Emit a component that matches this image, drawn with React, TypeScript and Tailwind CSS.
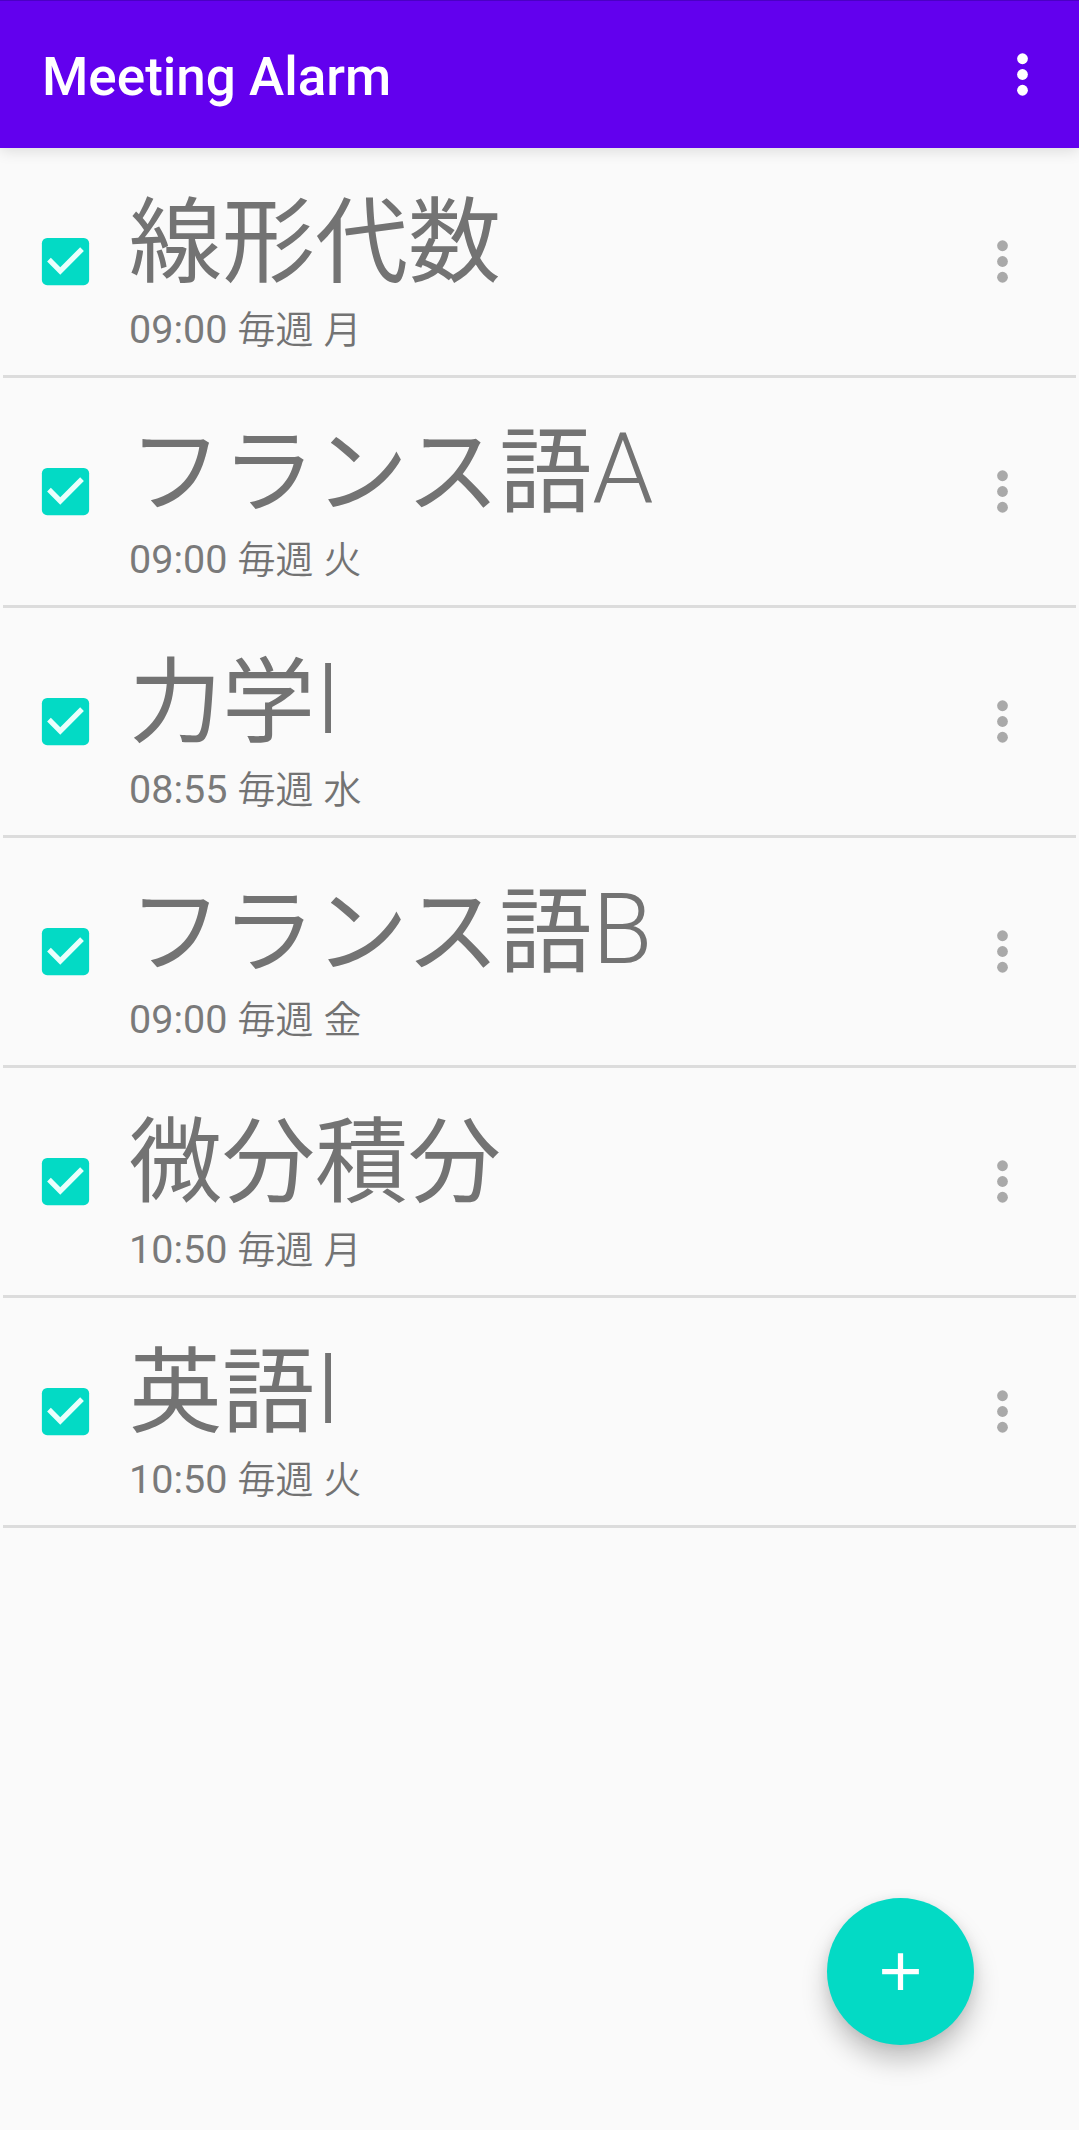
import React from "react";

type Alarm = { kanji: string; latin?: string; time: string; day: string };

const alarms: Alarm[] = [
  { kanji: "線形代数", time: "09:00", day: "月" },
  { kanji: "フランス語", latin: "A", time: "09:00", day: "火" },
  { kanji: "力学", latin: "I", time: "08:55", day: "水" },
  { kanji: "フランス語", latin: "B", time: "09:00", day: "金" },
  { kanji: "微分積分", time: "10:50", day: "月" },
  { kanji: "英語", latin: "I", time: "10:50", day: "火" },
];

function MoreIcon() {
  return (
    <svg viewBox="0 0 24 24" className="size-[63px]" fill="currentColor">
      <circle cx="12" cy="6" r="2.05" />
      <circle cx="12" cy="12" r="2.05" />
      <circle cx="12" cy="18" r="2.05" />
    </svg>
  );
}

function CheckIcon() {
  return (
    <svg viewBox="0 0 24 24" className="size-[63px] shrink-0">
      <rect x="3" y="3" width="18" height="18" rx="2" fill="#03dac5" />
      <path d="M10 17l-5-5 1.41-1.41L10 14.17l7.59-7.59L19 8z" fill="#e9fffc" />
    </svg>
  );
}

function AlarmRow({ alarm }: { alarm: Alarm }) {
  return (
    <li className="flex h-[230px] items-center border-b-3 border-[#dcdcdc] pl-[31.25px] pr-[42px]">
      <CheckIcon />
      <div className="ml-[31.75px] flex h-full grow flex-col whitespace-nowrap text-[#737373]">
        <div className="mt-[29px] flex h-[116px] items-baseline leading-[116px]">
          <span className="font-['Noto_Sans_CJK_JP',sans-serif] text-[93px]">{alarm.kanji}</span>
          {alarm.latin && (
            <span className="-translate-y-[2px] font-[Roboto,sans-serif] text-[98px] font-light">{alarm.latin}</span>
          )}
        </div>
        <div className="mt-[9px] flex h-[50px] items-baseline gap-[10px] leading-[50px]">
          <span className="font-[Roboto,sans-serif] text-[39.5px] text-[#7a7a7a]">{alarm.time}</span>
          <span className="font-['Noto_Sans_CJK_JP',sans-serif] text-[38px] font-[350]">毎週</span>
          <span className="font-['Noto_Sans_CJK_JP',sans-serif] text-[38px] font-[350]">{alarm.day}</span>
        </div>
      </div>
      <button className="text-[#a9a9a9]">
        <MoreIcon />
      </button>
    </li>
  );
}

export default function App() {
  return (
    <div className="relative h-[2130px] w-[1079px] overflow-hidden bg-[#fafafa]">
      <header className="flex h-[148px] items-center justify-between border-t border-[#4b00c4] bg-[#6200ee] pl-[42px] pr-[25px] text-white shadow-[0_3px_14px_rgba(0,0,0,0.12)]">
        <h1 className="mt-[5px] font-[Roboto,sans-serif] text-[53px] leading-[62px] font-medium">Meeting Alarm</h1>
        <button>
          <MoreIcon />
        </button>
      </header>
      <ul className="mx-[3px]">
        {alarms.map((alarm, i) => (
          <AlarmRow key={i} alarm={alarm} />
        ))}
      </ul>
      <button className="absolute right-[105px] bottom-[85px] flex size-[147px] items-center justify-center rounded-full bg-[#03dac5] shadow-[0_16px_26px_rgba(0,0,0,0.22),0_2px_12px_rgba(0,0,0,0.08)]">
        <svg viewBox="0 0 24 24" className="size-[63px]" fill="white">
          <path d="M19 13h-6v6h-2v-6H5v-2h6V5h2v6h6v2z" />
        </svg>
      </button>
    </div>
  );
}
